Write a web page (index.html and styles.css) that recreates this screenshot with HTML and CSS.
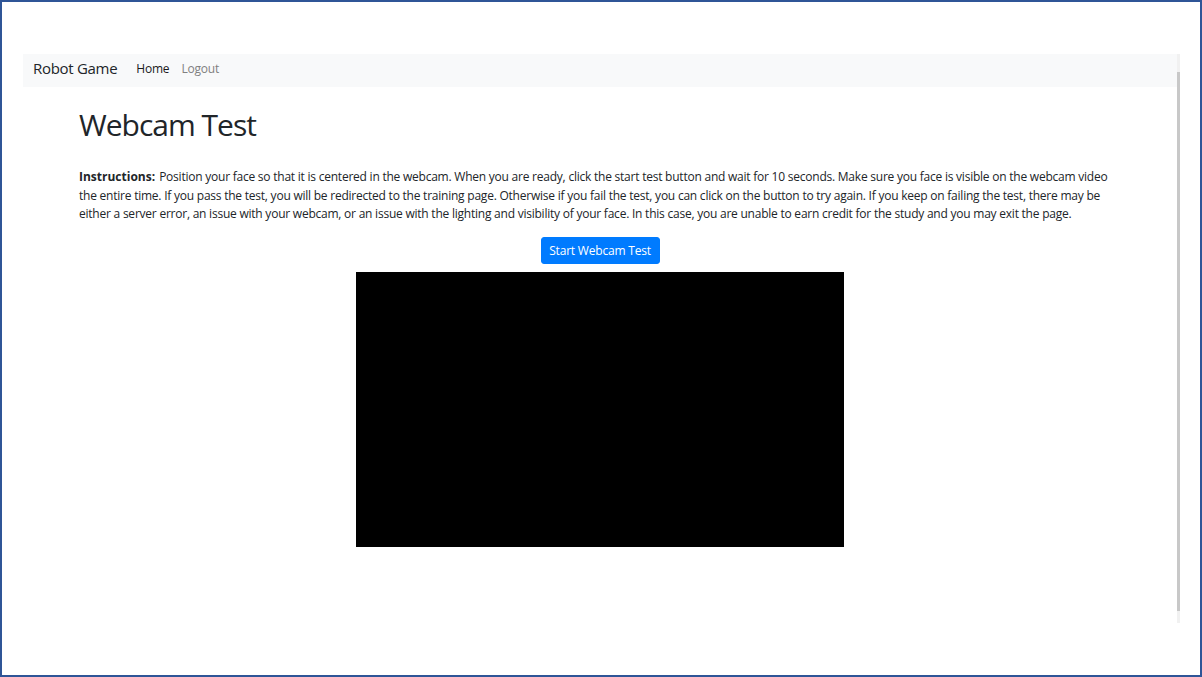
FILE: index.html
```html
<!DOCTYPE html>
<html lang="en">
<head>
<meta charset="utf-8">
<title>Webcam Test</title>
<link rel="stylesheet" href="styles.css">
</head>
<body>
<div class="frame">
  <div class="window">
    <div class="page">
      <nav class="navbar">
        <a class="brand" href="#">Robot Game</a>
        <a class="nav-link active" href="#">Home</a>
        <a class="nav-link muted" href="#">Logout</a>
      </nav>
      <main class="container">
        <h1 class="title">Webcam Test</h1>
        <p class="instructions"><strong>Instructions:</strong><span class="body-text">Position your face so that it is centered in the webcam. When you are ready, click the start test button and wait for 10 seconds. Make sure you face is visible on the webcam video the entire time. If you pass the test, you will be redirected to the training page. Otherwise if you fail the test, you can click on the button to try again. If you keep on failing the test, there may be either a server error, an issue with your webcam, or an issue with the lighting and visibility of your face. In this case, you are unable to earn credit for the study and you may exit the page.</span></p>
        <div class="center">
          <button class="btn-primary" type="button">Start Webcam Test</button>
          <div class="video"></div>
        </div>
      </main>
    </div>
    <div class="scrollbar"><div class="thumb"></div></div>
  </div>
</div>
</body>
</html>
```
FILE: styles.css
```css
* { box-sizing: border-box; }
html, body { margin: 0; padding: 0; background: #fff; }
body {
  font-family: "Open Sans", "Noto Sans", "Liberation Sans", sans-serif;
  color: #212529;
}
.frame {
  width: 1202px;
  height: 677px;
  border: 2px solid #2f5597;
  padding: 52px 0 0 21px;
  overflow: hidden;
}
.window {
  display: flex;
  width: 1157px;
  height: 569px;
}
.page {
  flex: 1;
  min-width: 0;
}
.navbar {
  height: 33px;
  background: #f8f9fa;
  display: flex;
  align-items: center;
  padding: 0 10px 5px;
}
.brand {
  font-size: 15px;
  letter-spacing: -0.3px;
  color: #212529;
  text-decoration: none;
  margin-right: 19px;
}
.nav-link {
  font-size: 12px;
  letter-spacing: -0.2px;
  text-decoration: none;
  margin-right: 12px;
}
.nav-link.active { color: #1a1a1a; }
.nav-link.muted { color: #808080; }
.container {
  margin: 0 56px;
}
.title {
  margin: 18px 0 0;
  font-size: 30px;
  letter-spacing: -1px;
  font-weight: 400;
  line-height: 40px;
  color: #212529;
}
.instructions {
  margin: 23px 0 0;
  font-size: 12px;
  letter-spacing: -0.23px;
  line-height: 18.5px;
}
.instructions strong {
  font-weight: 700;
  letter-spacing: 0;
  margin-right: 4px;
}
.center {
  display: flex;
  flex-direction: column;
  align-items: center;
  margin-top: 13px;
}
.btn-primary {
  width: 119px;
  height: 27px;
  background: #007bff;
  border: 1px solid #007bff;
  border-radius: 3px;
  color: #fff;
  font-family: inherit;
  font-size: 12px;
  letter-spacing: -0.2px;
  padding: 0;
}
.video {
  width: 488px;
  height: 275px;
  background: #000;
  margin-top: 8px;
}
.scrollbar {
  width: 3px;
  background: #f1f1f1;
  padding: 18px 0 12px;
  display: flex;
}
.thumb {
  flex: 1;
  background: #c8c8c8;
}
```
